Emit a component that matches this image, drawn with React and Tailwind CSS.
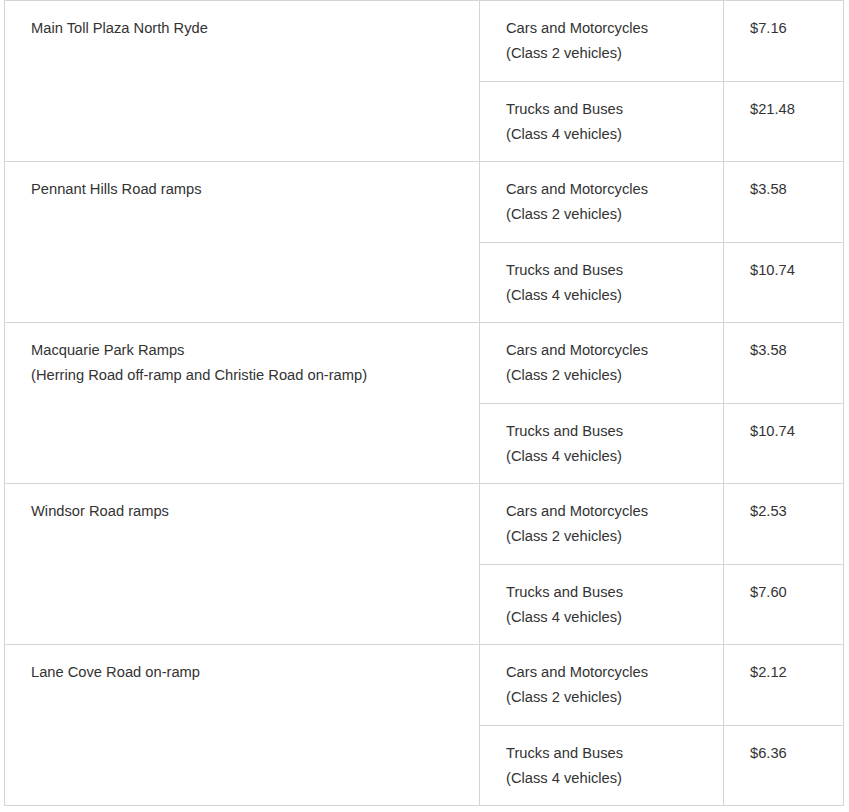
import React from "react";

const rows = [
  { name: ["Main Toll Plaza North Ryde"], car: "$7.16", truck: "$21.48" },
  { name: ["Pennant Hills Road ramps"], car: "$3.58", truck: "$10.74" },
  {
    name: ["Macquarie Park Ramps", "(Herring Road off-ramp and Christie Road on-ramp)"],
    car: "$3.58",
    truck: "$10.74",
  },
  { name: ["Windsor Road ramps"], car: "$2.53", truck: "$7.60" },
  { name: ["Lane Cove Road on-ramp"], car: "$2.12", truck: "$6.36" },
];

const td = "border border-[#d4d4d4] align-top pt-[15px] pl-[26px] pr-[10px]";

export default function App() {
  return (
    <div
      className="bg-white w-[849px] h-[812px] pl-[4px] text-[#333333] text-[14.7px] leading-[25px]"
      style={{ fontFamily: '"Liberation Sans", Arial, sans-serif' }}
    >
      <table className="border-collapse table-fixed w-[839px]">
        <colgroup>
          <col className="w-[475px]" />
          <col className="w-[244px]" />
          <col className="w-[120px]" />
        </colgroup>
        <tbody>
          {rows.map((r, i) => (
            <React.Fragment key={i}>
              <tr className="h-[80.5px]">
                <td rowSpan={2} className={td}>
                  {r.name.map((n, j) => (
                    <div key={j}>{n}</div>
                  ))}
                </td>
                <td className={td}>
                  <div>Cars and Motorcycles</div>
                  <div>(Class 2 vehicles)</div>
                </td>
                <td className={td}>{r.car}</td>
              </tr>
              <tr className="h-[80.5px]">
                <td className={td}>
                  <div>Trucks and Buses</div>
                  <div>(Class 4 vehicles)</div>
                </td>
                <td className={td}>{r.truck}</td>
              </tr>
            </React.Fragment>
          ))}
        </tbody>
      </table>
    </div>
  );
}
